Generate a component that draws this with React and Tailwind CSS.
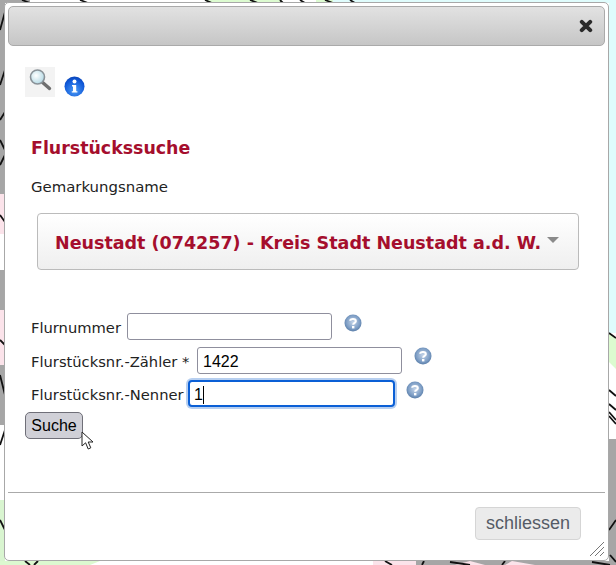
import React from "react";

function MapBackground() {
  return (
    <svg className="absolute inset-0" width="616" height="565" viewBox="0 0 616 565" fill="none">
      <rect width="616" height="565" fill="#ffffff" />
      <rect x="0" y="0" width="5" height="194" fill="#a6a6a6" />
      <rect x="0" y="194" width="5" height="40" fill="#fbe3ea" />
      <rect x="0" y="270" width="5" height="40" fill="#a6a6a6" />
      <rect x="0" y="310" width="5" height="55" fill="#fbe3ea" />
      <rect x="0" y="365" width="5" height="60" fill="#a6a6a6" />
      <rect x="0" y="500" width="5" height="65" fill="#d9f5d0" />
      <rect x="0" y="0" width="30" height="3" fill="#a6a6a6" />
      <rect x="206" y="0" width="76" height="3" fill="#dcfbd0" />
      <rect x="316" y="0" width="17" height="3" fill="#dcfbd0" />
      <rect x="333" y="0" width="283" height="3" fill="#dffcfc" />
      <rect x="609" y="0" width="7" height="333" fill="#dffcfc" />
      <path d="M609 333 L616 338 V369 L609 362 Z" fill="#dcfbd0" />
      <path d="M609 439 H616 V565 H609 Z" fill="#a6a6a6" />
      <path d="M0 561 H100 L90 565 H0 Z" fill="#dcf9d0" />
      <path d="M373 561 H416 V565 H373 Z" fill="#fbe3ea" />
      <path d="M416 561 H616 V565 H416 Z" fill="#a6a6a6" />
      <path d="M470 561 L485 565 H455 Z M512 561 L535 565 H505 Z" fill="#fbe3ea" />
      <g stroke="#111111" strokeWidth="1.8">
        <path d="M0 30 L5 12 M0 85 L5 70 M0 120 L5 112 M0 140 L5 150 M0 165 L5 155 M0 215 L5 222 M0 340 L5 345 M0 375 L5 395 M0 445 L5 430 M0 520 L5 530" />
        <path d="M22 0 L30 3 M80 0 L88 3 M205 0 L212 3 M250 0 L258 3 M300 0 L305 3 M350 0 L355 3 M280 0 L283 3 M325 0 L333 3" />
        <path d="M609 333 L616 338 M609 390 L616 396 M609 404 L616 410 M609 412 L616 420 M609 416 L616 424 M609 530 L616 520" />
        <path d="M25 561 L30 565 M38 561 L34 565 M385 561 L392 565 M450 562 L470 565 M592 562 L610 565 M610 555 L616 562 M424 561 L422 565 M505 561 L502 565" />
      </g>
    </svg>
  );
}

function HelpIcon({ className }) {
  return (
    <svg className={className} width="18" height="18" viewBox="0 0 18 18">
      <defs>
        <radialGradient id="helpGrad" cx="50%" cy="45%" r="55%">
          <stop offset="0" stopColor="#c4d4e8" />
          <stop offset="0.7" stopColor="#7f9fc6" />
          <stop offset="1" stopColor="#5a7ea9" />
        </radialGradient>
      </defs>
      <circle cx="9" cy="9" r="8.5" fill="url(#helpGrad)" />
      <path d="M6.2 6.8 C6.2 4.4 11.8 4.4 11.8 7.2 C11.8 8.8 9.2 8.8 9.2 10.8" stroke="#ffffff" strokeWidth="2.1" fill="none" />
      <rect x="8" y="12" width="2.4" height="2.4" fill="#ffffff" />
    </svg>
  );
}

function SearchIcon() {
  return (
    <svg width="24" height="24" viewBox="0 0 24 24">
      <defs>
        <radialGradient id="lens" cx="40%" cy="40%" r="60%">
          <stop offset="0" stopColor="#ffffff" />
          <stop offset="1" stopColor="#b7dbe6" />
        </radialGradient>
      </defs>
      <path d="M13.5 13.5 L21.5 20.5" stroke="#6f6f6f" strokeWidth="3.4" strokeLinecap="round" />
      <circle cx="9.5" cy="9" r="7" fill="url(#lens)" stroke="#8a9298" strokeWidth="1.6" />
    </svg>
  );
}

function InfoIcon() {
  return (
    <svg width="21" height="21" viewBox="0 0 21 21">
      <defs>
        <radialGradient id="infoGrad" cx="50%" cy="70%" r="70%">
          <stop offset="0" stopColor="#4d9cf5" />
          <stop offset="0.75" stopColor="#0f58d8" />
          <stop offset="1" stopColor="#0b46b8" />
        </radialGradient>
      </defs>
      <circle cx="10.5" cy="10.5" r="10" fill="url(#infoGrad)" />
      <circle cx="10.5" cy="5.5" r="2" fill="#ffffff" />
      <path d="M8 9 H12.2 V15.2 H13.4 V16.6 H7.8 V15.2 H9 V10.4 H8 Z" fill="#ffffff" />
    </svg>
  );
}

function Cursor() {
  return (
    <svg className="absolute left-[81px] top-[431px]" width="14" height="20" viewBox="0 0 14 20">
      <path d="M1 1 V15 L4.6 11.8 L7.2 18 L9.8 16.8 L7.2 11 H12 Z" fill="#ffffff" stroke="#222222" strokeWidth="1" strokeLinejoin="round" />
    </svg>
  );
}

function Row({ label, value, labelW, inputW, focus, helpClass, rowClass }) {
  return (
    <div className={"flex items-center " + rowClass}>
      <label className="pt-[4px] font-['DejaVu_Sans',sans-serif] text-[14.7px] leading-none text-[#222] whitespace-nowrap" style={{ width: labelW }}>
        {label}
      </label>
      <div
        className={
          focus
            ? "h-[27px] rounded-[4px] border-2 border-[#0a5fd6] bg-white shadow-[0_0_0_2px_#b7cff0] flex items-center pl-[4px] pt-[2px] font-['Liberation_Sans',sans-serif] text-[16px] text-black"
            : "h-[27px] rounded-[3px] border border-[#8f8f9d] bg-white flex items-center pl-[5px] pt-[2px] font-['Liberation_Sans',sans-serif] text-[16px] text-black"
        }
        style={{ width: inputW }}
      >
        {value}
        {focus && <span className="inline-block w-px h-[18px] bg-black" />}
      </div>
      <HelpIcon className={helpClass} />
    </div>
  );
}

export default function App() {
  return (
    <div className="relative w-[616px] h-[565px] overflow-hidden bg-white">
      <MapBackground />
      <div className="absolute left-[4px] top-[2px] w-[605px] h-[559px] rounded-[5px] border border-[#a8a8a8] bg-white p-[3px] flex flex-col">
        <div className="h-[40px] shrink-0 rounded-[5px] border border-[#aaaaaa] bg-gradient-to-b from-[#e2e2e2] to-[#c6c6c6] flex items-center justify-end pr-[11px]">
          <svg width="14" height="14" viewBox="0 0 14 14">
            <path d="M2.8 2.8 L11.2 11.2 M11.2 2.8 L2.8 11.2" stroke="#2a2a2a" strokeWidth="4" strokeLinecap="round" />
          </svg>
        </div>

        <div className="flex items-end ml-[17px] mt-[21px] gap-[9px]">
          <div className="w-[30px] h-[30px] bg-[#f3f3f3] flex items-start justify-center pt-[1px]">
            <SearchIcon />
          </div>
          <InfoIcon />
        </div>

        <h2 className="ml-[23px] mt-[40px] font-['DejaVu_Sans',sans-serif] font-bold text-[17.4px] leading-[22px] text-[#a50e2d]">
          Flurstückssuche
        </h2>
        <p className="ml-[23px] mt-[19px] font-['DejaVu_Sans',sans-serif] text-[14.9px] leading-[18px] text-[#222]">
          Gemarkungsname
        </p>

        <div className="ml-[29px] mt-[17px] w-[542px] h-[57px] shrink-0 rounded-[4px] border border-[#bbbbbb] bg-gradient-to-b from-[#ffffff] to-[#efefef] flex items-center pl-[17px]">
          <span className="mt-[4px] font-['DejaVu_Sans',sans-serif] font-bold text-[17.5px] text-[#a50e2d] whitespace-nowrap">
            Neustadt (074257) - Kreis Stadt Neustadt a.d. W.
          </span>
          <span className="ml-[6px] mb-[4px] w-0 h-0 border-x-[6px] border-x-transparent border-t-[6px] border-t-[#8a8a8a]" />
        </div>

        <Row rowClass="ml-[23px] mt-[43px]" label="Flurnummer" value="" labelW={96} inputW={205} helpClass="ml-[12px] mb-[7px]" />
        <Row rowClass="ml-[23px] mt-[7px]" label="Flurstücksnr.-Zähler *" value="1422" labelW={166} inputW={205} helpClass="ml-[12px] mb-[9px]" />
        <Row rowClass="ml-[23px] mt-[6px]" label="Flurstücksnr.-Nenner" value="1" labelW={157} inputW={207} focus helpClass="ml-[11px] mb-[7px]" />

        <div className="ml-[17px] mt-[5px] w-[58px] h-[27px] shrink-0 rounded-[5px] border border-[#6f6f78] bg-[#d0d0d7] flex items-center justify-center font-['Liberation_Sans',sans-serif] text-[16px] text-black">
          Suche
        </div>

        <div className="mt-[53px] h-px shrink-0 bg-[#aaaaaa]" />

        <div className="flex justify-end mt-[14px] pr-[24px]">
          <div className="w-[106px] h-[33px] rounded-[4px] border border-[#d5d5d5] bg-[#ebebeb] flex items-center justify-center font-['Liberation_Sans',sans-serif] text-[18px] text-[#555b66]">
            schliessen
          </div>
        </div>

        <svg className="absolute right-[3px] bottom-[3px]" width="16" height="16" viewBox="0 0 16 16">
          <path d="M1 15 L15 1 M6 15 L15 6 M11 15 L15 11" stroke="#777777" strokeWidth="1" />
        </svg>
      </div>
      <Cursor />
    </div>
  );
}
